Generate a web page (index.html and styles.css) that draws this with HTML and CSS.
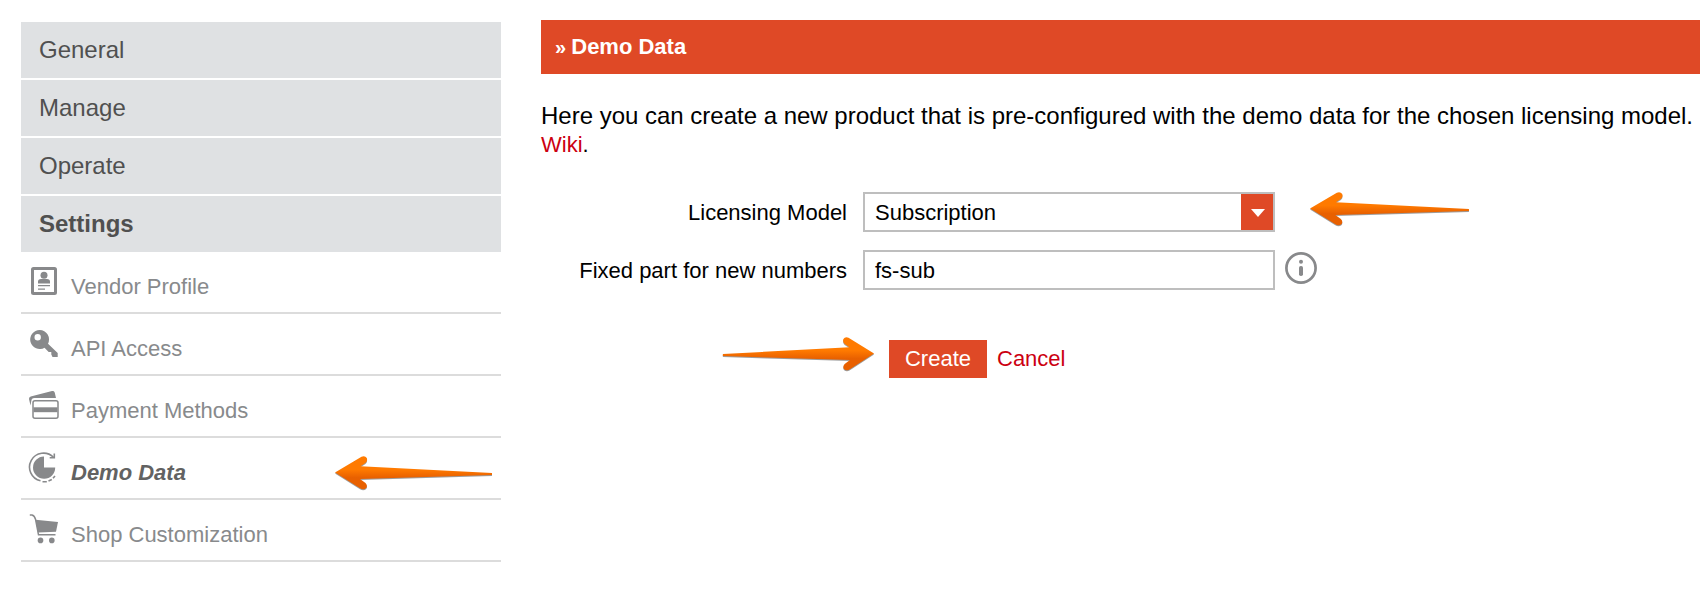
FILE: index.html
```html
<!DOCTYPE html>
<html lang="en">
<head>
<meta charset="utf-8">
<title>Demo Data</title>
<link rel="stylesheet" href="styles.css">
</head>
<body>
<svg class="defs" width="0" height="0" aria-hidden="true">
  <defs>
    <linearGradient id="orange" x1="0" y1="0" x2="0" y2="1">
      <stop offset="0.4" stop-color="#ff7a00"/>
      <stop offset="0.65" stop-color="#e86000"/>
    </linearGradient>
    <symbol id="arrow-left" viewBox="0 0 162 38">
      <path d="M1 17.500 L27.500 1.700 Q31 .3 32.800 3 Q33.800 6 31.500 8 L26.500 11.300 L158 18 V20 L26 24 L31.500 28 Q33.800 30.500 32.300 33 Q29.500 35.500 26 33.300 Z"/>
    </symbol>
  </defs>
</svg>
<div class="page">
  <nav class="sidebar">
    <a class="section">General</a>
    <a class="section">Manage</a>
    <a class="section">Operate</a>
    <a class="section open">Settings</a>
    <a class="item">
      <svg class="icon" viewBox="-1 0 32 32"><rect x="3.500" y="2.500" width="23" height="25" rx="1" fill="none" stroke="currentColor" stroke-width="3"/><circle cx="15" cy="9.200" r="3.500"/><path d="M9 17.500v-2q0-2.500 3-2.500h6q3 0 3 2.500v2zM9 19h12v1.200H9zM9 22.500h7v1.200H9z"/></svg>
      <span>Vendor Profile</span>
    </a>
    <a class="item">
      <svg class="icon" viewBox="-1 0 32 32"><path fill-rule="evenodd" d="M10.700 2a9.500 9.500 0 0 1 8.300 13.800L28.700 25V29H23.500L22.300 26.500V24H19.700L15.500 19.700A9.500 9.500 0 1 1 10.700 2ZM8.700 6a3.200 3.200 0 1 0 0 6.400a3.200 3.200 0 0 0 0-6.400Z"/></svg>
      <span>API Access</span>
    </a>
    <a class="item">
      <svg class="icon" viewBox="0 0 32 32"><path d="M2.500 15.500L1 9Q.8 7.200 2.700 6.600L24 1.100Q26 .7 26.700 2.500L28 8H6.500Q3.500 8 3.300 11Z"/><rect x="5" y="10.700" width="25" height="17.600" rx="2" fill="none" stroke="currentColor" stroke-width="1.500"/><path d="M5.500 17.300h24v4.900h-24z"/></svg>
      <span>Payment Methods</span>
    </a>
    <a class="item current">
      <svg class="icon" viewBox="0 0 32 32"><path d="M16 4.500V15.500H27.200A11.100 11.100 0 1 1 16 4.500Z"/><g fill="none" stroke="currentColor" stroke-width="1.600"><path d="M12.500 28.800A14 14 0 1 1 25.500 5.300"/><path d="M14.500 29.700h4.300M20.500 28.900l3.300-1.500M25 26.200l2-2.200"/><path d="M26.300 1.500V5.800H21.700"/></g></svg>
      <span>Demo Data</span>
      <svg class="arrow arrow-item" viewBox="0 0 162 38" fill="url(#orange)"><use href="#arrow-left"/></svg>
    </a>
    <a class="item">
      <svg class="icon" viewBox="-1 0 32 32"><path d="M6.500 5.800L29 8L27 17.800L9 18.600Z"/><path d="M.8 .9H3Q5.500 1.400 6.500 5.200L9.500 20.800H26.500" fill="none" stroke="currentColor" stroke-width="1.500"/><circle cx="11.500" cy="26.400" r="2.800"/><circle cx="22.800" cy="26.400" r="2.800"/></svg>
      <span>Shop Customization</span>
    </a>
  </nav>
  <main class="content">
    <h1 class="title"><span class="mark">»</span> Demo Data</h1>
    <p class="intro">Here you can create a new product that is pre-configured with the demo data for the chosen licensing model.</p>
    <p class="more"><a class="link">Wiki</a>.</p>
    <form class="form">
      <div class="row">
        <label class="label">Licensing Model</label>
        <div class="field select">
          <span>Subscription</span>
          <span class="toggle"><svg width="14" height="8" viewBox="0 0 14 8"><path d="M0 0h14L7 8z" fill="#fff"/></svg></span>
          <svg class="arrow arrow-field" viewBox="0 0 162 38" preserveAspectRatio="none" fill="url(#orange)"><use href="#arrow-left"/></svg>
        </div>
      </div>
      <div class="row">
        <label class="label">Fixed part for new numbers</label>
        <div class="field"><span>fs-sub</span></div>
        <svg class="info" viewBox="0 0 32 32"><circle cx="16" cy="16" r="14.600" fill="none" stroke="currentColor" stroke-width="2.700"/><circle cx="16" cy="9.700" r="2"/><rect x="14" y="14" width="4" height="10" rx="1.800"/></svg>
      </div>
      <div class="actions">
        <a class="create">Create<svg class="arrow arrow-create" viewBox="0 0 162 38" preserveAspectRatio="none" fill="url(#orange)"><use href="#arrow-left"/></svg></a>
        <a class="link">Cancel</a>
      </div>
    </form>
  </main>
</div>
</body>
</html>
```
FILE: styles.css
```css
* { box-sizing: border-box; }
body {
  margin: 0;
  background: #fff;
  color: #000;
  font-family: "Liberation Sans", Arial, sans-serif;
  font-size: 22px;
  overflow: hidden;
}
.defs { position: absolute; }
.page {
  display: grid;
  grid-template-columns: 480px 1fr;
  column-gap: 40px;
  padding: 20px 0 0 21px;
}
.sidebar { padding-top: 2px; }
.section {
  display: block;
  height: 56px;
  margin-bottom: 2px;
  padding-left: 18px;
  background: #dfe1e3;
  color: #505050;
  font-size: 24px;
  line-height: 56px;
}
.section.open { margin-bottom: 0; font-weight: bold; }
.item {
  position: relative;
  display: flex;
  gap: 11px;
  height: 62px;
  padding: 14px 0 0 7px;
  border-bottom: 2px solid #dcdcdc;
  color: #888a8c;
}
.item span { line-height: 42px; }
.item.current span { color: #626262; font-weight: bold; font-style: italic; }
.icon { width: 32px; height: 32px; fill: currentColor; color: #88898b; }
.arrow {
  position: absolute;
  width: 162px;
  height: 38px;
  filter: drop-shadow(0 1px 0.5px rgba(60, 60, 60, 0.5));
}
.arrow-item { left: 313px; top: 17px; }
.arrow-field { left: 444px; top: -3px; width: 164px; }
.arrow-create {
  left: -170px;
  top: -4px;
  width: 156px;
  transform: scaleX(-1);
}
.title {
  height: 54px;
  margin: 0;
  padding-left: 14px;
  background: #df4926;
  color: #fff;
  font-size: 22px;
  line-height: 54px;
}
.mark { margin-right: -1px; font-size: 20px; }
.intro {
  margin: 28px 0 0;
  font-size: 24px;
  line-height: 28px;
  letter-spacing: -0.006px;
  white-space: nowrap;
}
.more { margin: 0; line-height: 30px; }
.link { color: #cc0011; }
.form { margin-top: 32px; }
.row { display: flex; height: 40px; margin-bottom: 18px; }
.label {
  width: 306px;
  margin-right: 16px;
  line-height: 42px;
  text-align: right;
}
.field {
  position: relative;
  display: flex;
  justify-content: space-between;
  width: 412px;
  padding-left: 10px;
  border: 2px solid #bebebe;
  line-height: 38px;
}
.toggle {
  display: flex;
  align-items: center;
  justify-content: center;
  width: 32px;
  padding: 2px 0 0 2px;
  background: #df4926;
}
.info { width: 32px; height: 32px; margin: 2px 0 0 10px; fill: currentColor; color: #88898b; }
.actions {
  display: flex;
  gap: 10px;
  margin: 50px 0 0 348px;
  line-height: 38px;
}
.create {
  position: relative;
  width: 98px;
  height: 38px;
  background: #df4926;
  color: #fff;
  text-align: center;
}
```
